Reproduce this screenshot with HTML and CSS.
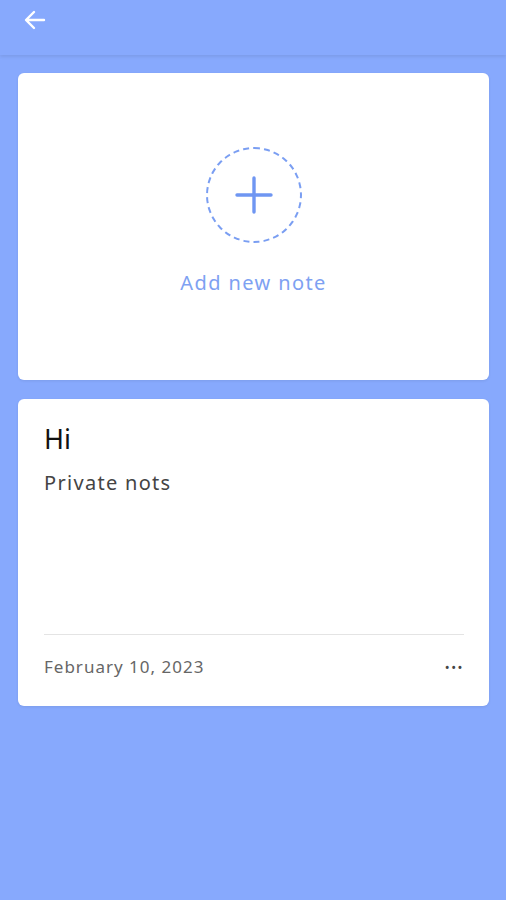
FILE: index.html
```html
<!DOCTYPE html>
<html lang="en">
<head>
  <meta charset="UTF-8" />
  <meta name="viewport" content="width=device-width, initial-scale=1.0" />
  <title>Notes</title>
  <link rel="stylesheet" href="styles.css">
</head>
<body>
  <div class="appbar">
    <button class="back" aria-label="Back">
      <svg width="24" height="24" viewBox="0 0 24 24" fill="none" stroke="#fff" stroke-width="2.4" stroke-linecap="round" stroke-linejoin="round">
        <path d="M21 12H4M11 4l-8 8 8 8" />
      </svg>
    </button>
  </div>

  <div class="list">
    <div class="card add-card">
      <div class="add-circle">
        <svg width="40" height="40" viewBox="0 0 40 40" stroke="#6f96f2" stroke-width="3.4" stroke-linecap="round">
          <path d="M20 3v34M3 20h34" />
        </svg>
      </div>
      <div class="add-label">Add new note</div>
    </div>

    <div class="card note-card">
      <div class="note-title">Hi</div>
      <div class="note-body">Private nots</div>
      <div class="note-footer">
        <span class="note-date">February 10, 2023</span>
        <span class="more">&bull;&bull;&bull;</span>
      </div>
    </div>
  </div>
</body>
</html>
```

FILE: styles.css
```css
body {
  margin: 0;
  background-color: #87a9fd;
  font-family: "Noto Sans", "Open Sans", sans-serif;
  height: 900px;
}
.appbar {
  height: 55px;
  background-color: #87a9fd;
  box-shadow: 0 2px 3px rgba(0,0,0,0.08);
  padding: 8px 0 0 22px;
  box-sizing: border-box;
}
.back {
  background: none;
  border: none;
  padding: 0;
  width: 26px;
  height: 26px;
  cursor: pointer;
}
.list {
  padding: 18px 17px 0 18px;
  display: flex;
  flex-direction: column;
  gap: 19px;
}
.card {
  background-color: #fff;
  border-radius: 6px;
  box-shadow: 0 1px 3px rgba(0,0,0,0.08);
}
.add-card {
  height: 307px;
  display: flex;
  flex-direction: column;
  align-items: center;
  padding-top: 74px;
  box-sizing: border-box;
}
.add-circle {
  width: 92px;
  height: 92px;
  border: 2px dashed #7a9ef2;
  border-radius: 50%;
  display: flex;
  align-items: center;
  justify-content: center;
  margin-left: 1px;
}
.add-label {
  margin-top: 26px;
  color: #7ea1f2;
  font-size: 20px;
  letter-spacing: 1.4px;
}
.note-card {
  height: 307px;
  box-sizing: border-box;
  padding: 22px 25px 0 26px;
  display: flex;
  flex-direction: column;
}
.note-title {
  font-size: 27px;
  color: #111;
  line-height: 36px;
}
.note-body {
  margin-top: 12px;
  font-size: 20px;
  color: #444;
  letter-spacing: 1.3px;
}
.note-footer {
  margin-top: auto;
  margin-bottom: 28px;
  border-top: 1px solid #e4e4e4;
  padding-top: 20px;
  display: flex;
  justify-content: space-between;
  align-items: center;
}
.note-date {
  font-size: 17px;
  color: #666;
  letter-spacing: 1px;
}
.more {
  font-size: 13px;
  color: #444;
  letter-spacing: 1.5px;
  margin-right: 0;
}
```
